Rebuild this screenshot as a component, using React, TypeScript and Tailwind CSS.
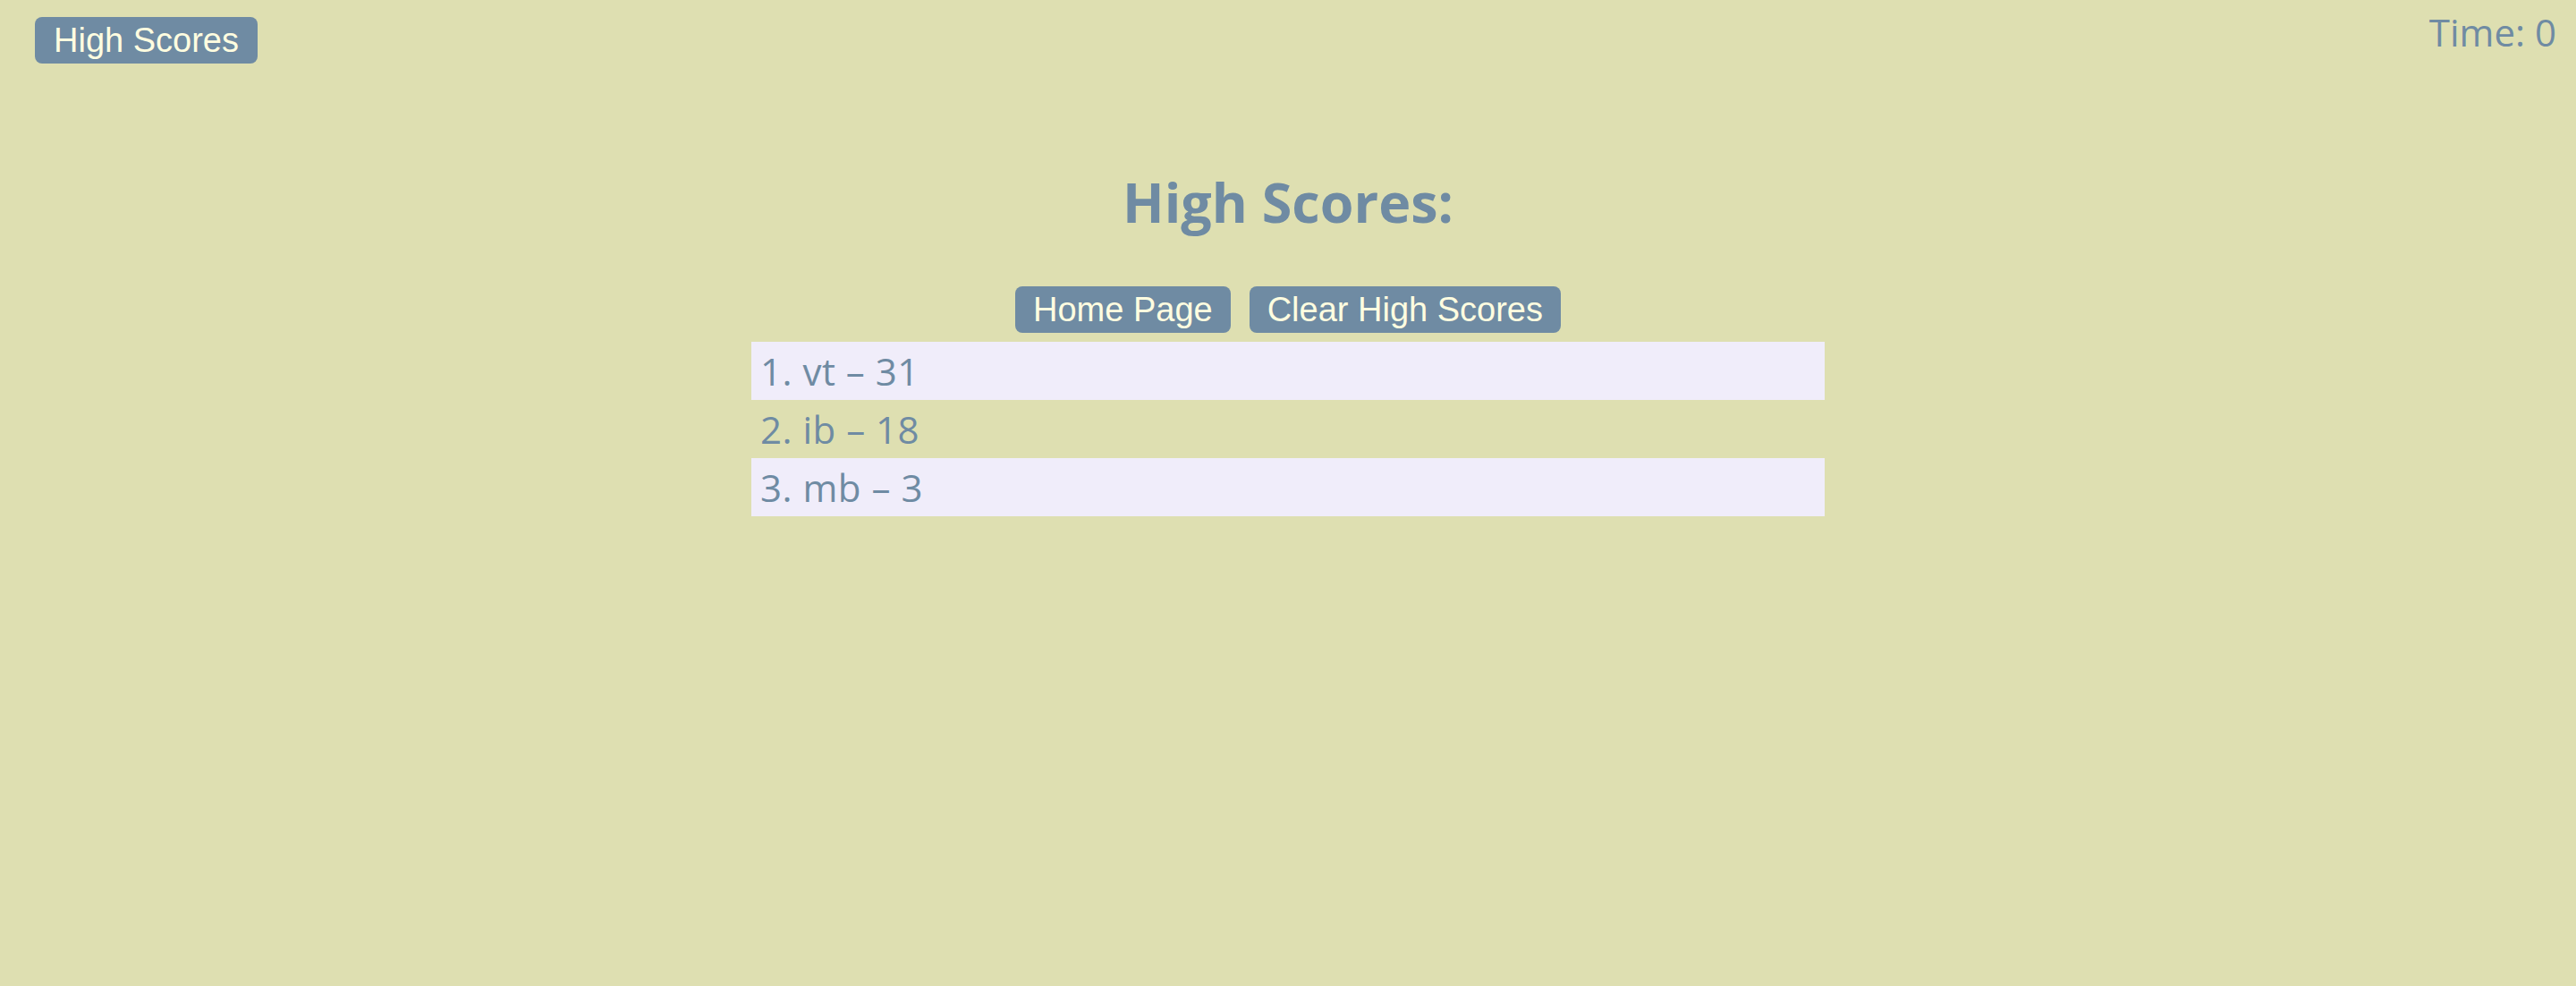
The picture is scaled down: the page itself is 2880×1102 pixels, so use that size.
import React from 'react';

interface Score {
  name: string;
  score: number;
}

const scores: Score[] = [
  { name: 'vt', score: 31 },
  { name: 'ib', score: 18 },
  { name: 'mb', score: 3 },
];

const App: React.FC = () => {
  return (
    <div className="min-h-[1102px] w-full bg-[#dedfb1]">
      {/* Top bar */}
      <div className="flex items-start justify-between">
        <button className="ml-[39px] mt-[19px] h-[52px] rounded-[8px] bg-[#6f8ba3] px-[21px] font-['Liberation_Sans',Arial,sans-serif] text-[38px] leading-[52px] text-[#fffde0]">
          High Scores
        </button>
        <div className="mr-[22px] mt-[15px] font-['Open_Sans',sans-serif] text-[42px] leading-none text-[#6f8ba3]">
          Time: 0
        </div>
      </div>

      {/* Heading */}
      <div className="mt-[124px] flex justify-center">
        <h1 className="font-['Open_Sans',sans-serif] text-[61px] font-bold leading-none text-[#6f8ba3]">
          High Scores:
        </h1>
      </div>

      {/* Actions */}
      <div className="mt-[64px] flex justify-center gap-[21px]">
        <button className="h-[52px] rounded-[8px] bg-[#6f8ba3] px-[20px] font-['Liberation_Sans',Arial,sans-serif] text-[38px] leading-[52px] text-[#fffde0]">
          Home Page
        </button>
        <button className="h-[52px] rounded-[8px] bg-[#6f8ba3] px-[20px] font-['Liberation_Sans',Arial,sans-serif] text-[38px] leading-[52px] text-[#fffde0]">
          Clear High Scores
        </button>
      </div>

      {/* Score list */}
      <ol className="mx-auto mt-[10px] w-[1200px]">
        {scores.map((s, i) => (
          <li
            key={s.name}
            className={`h-[65px] pl-[10px] font-['Open_Sans',sans-serif] text-[42px] leading-[65px] tracking-[0.5px] text-[#6f8ba3] ${
              i % 2 === 0 ? 'bg-[#f0edfa]' : 'bg-transparent'
            }`}
          >
            {i + 1}. {s.name} – {s.score}
          </li>
        ))}
      </ol>
    </div>
  );
};

export default App;
